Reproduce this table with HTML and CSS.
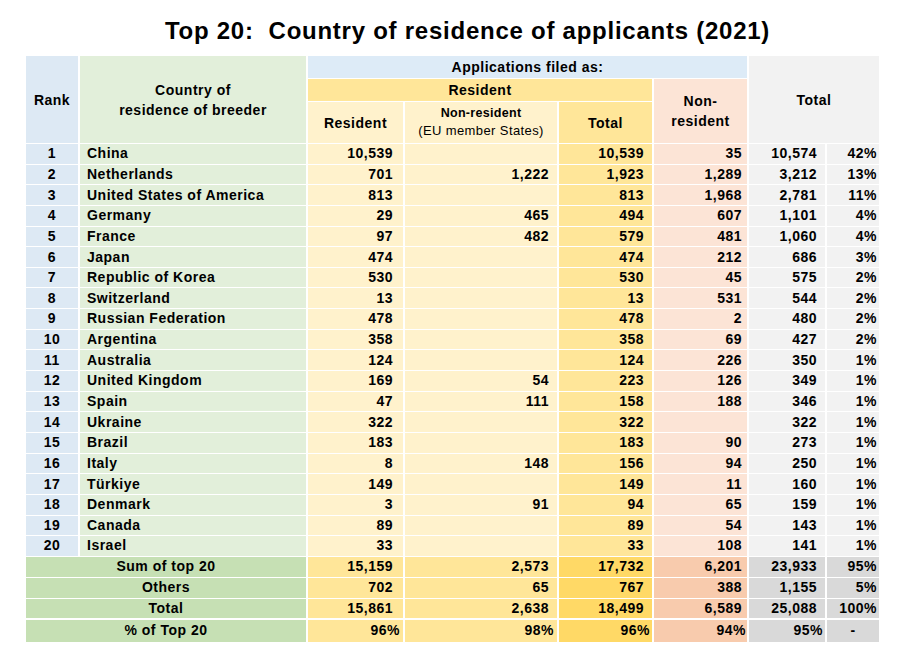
FILE: index.html
```html
<!DOCTYPE html>
<html>
<head>
<meta charset="utf-8">
<link rel="stylesheet" href="styles.css">
</head>
<body>
<h1 class="title">Top 20:&nbsp; Country of residence of applicants (2021)</h1>
<table class="grid">
<colgroup>
<col class="c-rank"><col class="c-country"><col class="c-res"><col class="c-eu"><col class="c-tot"><col class="c-nr"><col class="c-gt"><col class="c-pct">
</colgroup>
<thead>
<tr class="hr1">
<th rowspan="3" class="rank-h">Rank</th>
<th rowspan="3" class="country-h">Country of<br>residence of breeder</th>
<th colspan="4" class="filed-h">Applications filed as:</th>
<th rowspan="3" colspan="2" class="gt-h">Total</th>
</tr>
<tr class="hr2">
<th colspan="3" class="res-h">Resident</th>
<th rowspan="2" class="nr-h">Non-<br>resident</th>
</tr>
<tr class="hr3">
<th class="sub-h">Resident</th>
<th class="sub-h small">Non-resident<br><span class="reg">(EU member States)</span></th>
<th class="tot-h">Total</th>
</tr>
</thead>
<tbody>
<tr><td class="rank">1</td><td class="country">China</td><td class="res">10,539</td><td class="eu"></td><td class="tot">10,539</td><td class="nr">35</td><td class="gt">10,574</td><td class="pct">42%</td></tr>
<tr><td class="rank">2</td><td class="country">Netherlands</td><td class="res">701</td><td class="eu">1,222</td><td class="tot">1,923</td><td class="nr">1,289</td><td class="gt">3,212</td><td class="pct">13%</td></tr>
<tr><td class="rank">3</td><td class="country">United States of America</td><td class="res">813</td><td class="eu"></td><td class="tot">813</td><td class="nr">1,968</td><td class="gt">2,781</td><td class="pct">11%</td></tr>
<tr><td class="rank">4</td><td class="country">Germany</td><td class="res">29</td><td class="eu">465</td><td class="tot">494</td><td class="nr">607</td><td class="gt">1,101</td><td class="pct">4%</td></tr>
<tr><td class="rank">5</td><td class="country">France</td><td class="res">97</td><td class="eu">482</td><td class="tot">579</td><td class="nr">481</td><td class="gt">1,060</td><td class="pct">4%</td></tr>
<tr><td class="rank">6</td><td class="country">Japan</td><td class="res">474</td><td class="eu"></td><td class="tot">474</td><td class="nr">212</td><td class="gt">686</td><td class="pct">3%</td></tr>
<tr><td class="rank">7</td><td class="country">Republic of Korea</td><td class="res">530</td><td class="eu"></td><td class="tot">530</td><td class="nr">45</td><td class="gt">575</td><td class="pct">2%</td></tr>
<tr><td class="rank">8</td><td class="country">Switzerland</td><td class="res">13</td><td class="eu"></td><td class="tot">13</td><td class="nr">531</td><td class="gt">544</td><td class="pct">2%</td></tr>
<tr><td class="rank">9</td><td class="country">Russian Federation</td><td class="res">478</td><td class="eu"></td><td class="tot">478</td><td class="nr">2</td><td class="gt">480</td><td class="pct">2%</td></tr>
<tr><td class="rank">10</td><td class="country">Argentina</td><td class="res">358</td><td class="eu"></td><td class="tot">358</td><td class="nr">69</td><td class="gt">427</td><td class="pct">2%</td></tr>
<tr><td class="rank">11</td><td class="country">Australia</td><td class="res">124</td><td class="eu"></td><td class="tot">124</td><td class="nr">226</td><td class="gt">350</td><td class="pct">1%</td></tr>
<tr><td class="rank">12</td><td class="country">United Kingdom</td><td class="res">169</td><td class="eu">54</td><td class="tot">223</td><td class="nr">126</td><td class="gt">349</td><td class="pct">1%</td></tr>
<tr><td class="rank">13</td><td class="country">Spain</td><td class="res">47</td><td class="eu">111</td><td class="tot">158</td><td class="nr">188</td><td class="gt">346</td><td class="pct">1%</td></tr>
<tr><td class="rank">14</td><td class="country">Ukraine</td><td class="res">322</td><td class="eu"></td><td class="tot">322</td><td class="nr"></td><td class="gt">322</td><td class="pct">1%</td></tr>
<tr><td class="rank">15</td><td class="country">Brazil</td><td class="res">183</td><td class="eu"></td><td class="tot">183</td><td class="nr">90</td><td class="gt">273</td><td class="pct">1%</td></tr>
<tr><td class="rank">16</td><td class="country">Italy</td><td class="res">8</td><td class="eu">148</td><td class="tot">156</td><td class="nr">94</td><td class="gt">250</td><td class="pct">1%</td></tr>
<tr><td class="rank">17</td><td class="country">Türkiye</td><td class="res">149</td><td class="eu"></td><td class="tot">149</td><td class="nr">11</td><td class="gt">160</td><td class="pct">1%</td></tr>
<tr><td class="rank">18</td><td class="country">Denmark</td><td class="res">3</td><td class="eu">91</td><td class="tot">94</td><td class="nr">65</td><td class="gt">159</td><td class="pct">1%</td></tr>
<tr><td class="rank">19</td><td class="country">Canada</td><td class="res">89</td><td class="eu"></td><td class="tot">89</td><td class="nr">54</td><td class="gt">143</td><td class="pct">1%</td></tr>
<tr><td class="rank">20</td><td class="country">Israel</td><td class="res">33</td><td class="eu"></td><td class="tot">33</td><td class="nr">108</td><td class="gt">141</td><td class="pct">1%</td></tr>
</tbody>
<tfoot>
<tr class="sum"><td colspan="2" class="label">Sum of top 20</td><td class="res">15,159</td><td class="eu">2,573</td><td class="tot">17,732</td><td class="nr">6,201</td><td class="gt">23,933</td><td class="pct">95%</td></tr>
<tr class="sum"><td colspan="2" class="label">Others</td><td class="res">702</td><td class="eu">65</td><td class="tot">767</td><td class="nr">388</td><td class="gt">1,155</td><td class="pct">5%</td></tr>
<tr class="sum sum-total"><td colspan="2" class="label">Total</td><td class="res">15,861</td><td class="eu">2,638</td><td class="tot">18,499</td><td class="nr">6,589</td><td class="gt">25,088</td><td class="pct">100%</td></tr>
<tr class="sum share"><td colspan="2" class="label">% of Top 20</td><td class="res">96%</td><td class="eu">98%</td><td class="tot">96%</td><td class="nr">94%</td><td class="gt">95%</td><td class="pct dash">-</td></tr>
</tfoot>
</table>
</body>
</html>
```

FILE: styles.css
```css
html, body {
  margin: 0;
  padding: 0;
  background: #ffffff;
}

body {
  font-family: "Liberation Sans", Arial, sans-serif;
  color: #000000;
}

.title {
  margin: 0;
  padding: 17px 0 0 26px;
  height: 28px;
  line-height: 28px;
  font-size: 24px;
  font-weight: bold;
  letter-spacing: 0.75px;
  text-align: center;
  white-space: nowrap;
}

.grid {
  margin: 10px 0 0 24px;
  width: 857px;
  table-layout: fixed;
  border-collapse: separate;
  border-spacing: 2px 1px;
  font-size: 14px;
  font-weight: bold;
  letter-spacing: 0.5px;
}

.c-rank { width: 52px; }
.c-country { width: 226px; }
.c-res { width: 95px; }
.c-eu { width: 152px; }
.c-tot { width: 93px; }
.c-nr { width: 93px; }
.c-gt { width: 76px; }
.c-pct { width: 52px; }

th, td {
  padding: 0;
  white-space: nowrap;
}

th {
  font-weight: bold;
  text-align: center;
  vertical-align: middle;
  line-height: 20px;
}

.hr1 th { height: 22px; }
.hr2 th { height: 22px; }
.hr3 th { height: 41px; }

.rank-h { background: #dde9f4; }
.country-h { background: #e2efda; }
.filed-h { background: #ddebf7; }
.gt-h { background: #f2f2f2; }
.res-h { background: #ffe699; }
.nr-h { background: #fce4d6; }
.sub-h { background: #fff2cc; }
.tot-h { background: #ffe699; }

.small {
  font-size: 12.5px;
  line-height: 17px;
  letter-spacing: 0.3px;
}

.reg {
  font-weight: normal;
  font-size: 13px;
  letter-spacing: 0.4px;
}

tbody td {
  height: 19.65px;
  line-height: 19px;
  vertical-align: middle;
}

.rank {
  background: #dde9f4;
  text-align: center;
}

.country {
  background: #e2efda;
  text-align: left;
  padding-left: 7px;
}

.res, .eu, .tot, .nr, .gt, .pct {
  text-align: right;
}

.res { background: #fff2cc; padding-right: 10px; }
.eu { background: #fff2cc; padding-right: 8px; }
.tot { background: #ffe699; padding-right: 8px; }
.nr { background: #fce4d6; padding-right: 5px; }
.gt { background: #f2f2f2; padding-right: 8px; }
.pct { background: #f2f2f2; padding-right: 2px; }

.sum td {
  height: 20px;
  line-height: 19px;
}

.sum-total td { height: 19px; }

.sum .label {
  background: #c6e0b4;
  text-align: center;
}

.sum .res, .sum .eu { background: #ffe699; }
.sum .tot { background: #ffd966; }
.sum .nr { background: #f8cbad; }
.sum .gt, .sum .pct { background: #d9d9d9; }

.share td {
  height: 22px;
  border-top: 1px solid #ffffff;
}

.share .res { padding-right: 3px; }
.share .eu { padding-right: 3px; }
.share .tot { padding-right: 2px; }
.share .nr { padding-right: 1px; }
.share .gt { padding-right: 2px; }
.share .dash { text-align: center; padding-right: 0; }
```
